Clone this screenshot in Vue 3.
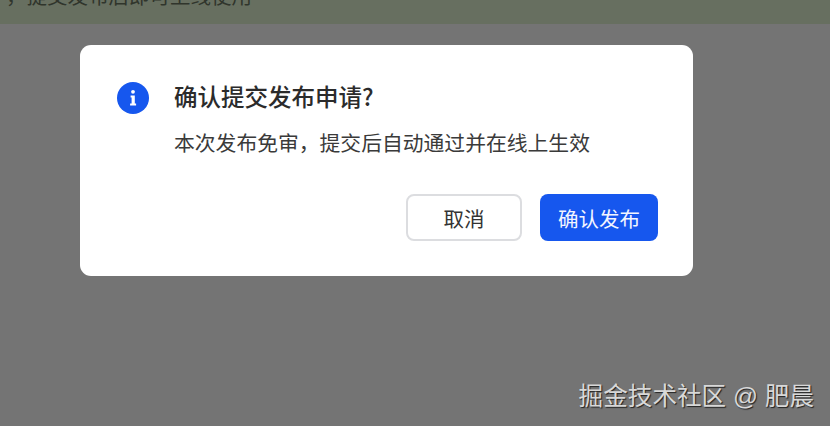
<script setup>
const title = '确认提交发布申请?'
const desc = '本次发布免审，提交后自动通过并在线上生效'
</script>

<template>
  <div class="page">
    <div class="notice">
      <p class="notice-text">，提交发布后即可上线使用</p>
    </div>
    <div class="dialog">
      <div class="dialog-body">
        <svg class="info-icon" viewBox="0 0 32 32" width="32" height="32">
          <circle cx="16" cy="16" r="16" fill="#1657ee" />
          <circle cx="16" cy="9.8" r="1.9" fill="#fff" />
          <path d="M13.6 13.6h4.2v7.8h1.3v2h-6v-2h1.5v-5.8h-1z" fill="#fff" />
        </svg>
        <div class="dialog-text">
          <div class="dialog-title">{{ title }}</div>
          <div class="dialog-desc">{{ desc }}</div>
        </div>
      </div>
      <div class="dialog-footer">
        <button class="btn btn-cancel">取消</button>
        <button class="btn btn-primary">确认发布</button>
      </div>
    </div>
    <div class="watermark">掘金技术社区 @ 肥晨</div>
  </div>
</template>

<style>
html,
body {
  margin: 0;
  background: #747474;
}
</style>

<style scoped>
.page {
  position: relative;
  width: 830px;
  height: 426px;
  overflow: hidden;
  background: #747474;
  font-family: "Liberation Sans", "Noto Sans CJK SC", sans-serif;
}

.notice {
  height: 24px;
  background: #676f60;
  overflow: hidden;
}

.notice-text {
  margin: -18px 0 0 6px;
  font-size: 20.5px;
  line-height: 30px;
  color: #30352c;
}

.dialog {
  width: 613px;
  height: 231px;
  box-sizing: border-box;
  margin: 21px 0 0 80px;
  padding: 37px 35px 35px 37px;
  background: #fff;
  border-radius: 11px;
  display: flex;
  flex-direction: column;
  justify-content: space-between;
}

.dialog-body {
  display: flex;
  gap: 25px;
}

.info-icon {
  flex-shrink: 0;
}

.dialog-text {
  display: flex;
  flex-direction: column;
  gap: 17px;
}

.dialog-title {
  margin-top: -2px;
  font-family: "Noto Sans CJK SC", sans-serif;
  font-size: 23.5px;
  line-height: 32px;
  font-weight: 500;
  color: #2b2b2b;
}

.dialog-desc {
  font-size: 20.8px;
  line-height: 30px;
  color: #3a3a3a;
}

.dialog-footer {
  display: flex;
  justify-content: flex-end;
  gap: 18px;
}

.btn {
  width: 116px;
  height: 47px;
  box-sizing: border-box;
  border-radius: 8px;
  font-family: inherit;
  font-size: 20.5px;
  padding: 0;
}

.btn-cancel {
  background: #fff;
  border: 2px solid #dcdde0;
  color: #333;
}

.btn-primary {
  width: 118px;
  background: #1657ee;
  border: none;
  color: #f2f5ff;
}

.watermark {
  position: absolute;
  right: 16px;
  top: 381px;
  font-size: 24.6px;
  line-height: 32px;
  color: #d8d8d8;
  text-shadow: 1px 1px 1px #222;
}
</style>
